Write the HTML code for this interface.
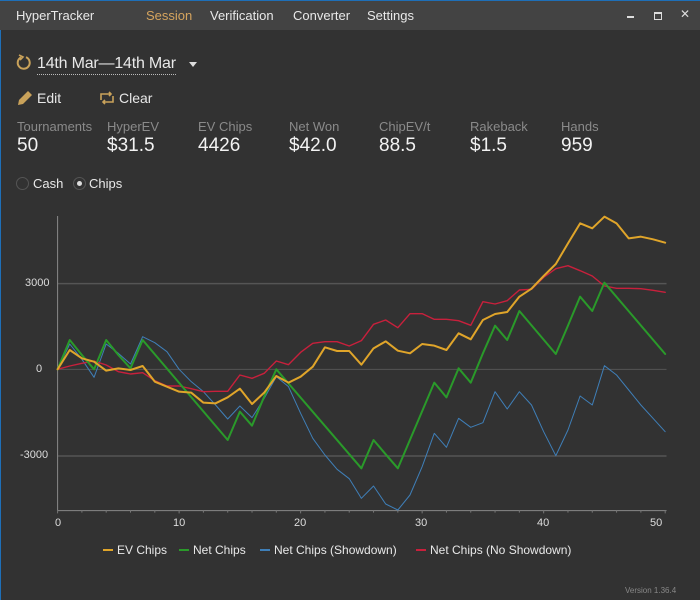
<!DOCTYPE html>
<html><head><style>
body{margin:0;width:700px;height:600px;background:#323232;font-family:"Liberation Sans",sans-serif;color:#e8e8e8;position:relative;overflow:hidden}
.a{position:absolute;white-space:nowrap}
.tb{position:absolute;left:0;top:0;width:700px;height:30px;background:#434343;border-top:1px solid #1e6fb8;box-sizing:border-box}
.lbl{color:#8a8a8a;font-size:13px;top:119px}
.val{color:#f2f2f2;font-size:19px;top:135px}
</style></head><body>
<div style="position:absolute;left:0;top:0;width:1px;height:600px;background:#1e6fb8"></div>
<div class="tb"></div>
<div class="a" style="left:16px;top:8px;font-size:13px">HyperTracker</div>
<div class="a" style="left:146px;top:8px;font-size:13px;color:#d5a45e">Session</div>
<div class="a" style="left:210px;top:8px;font-size:13px">Verification</div>
<div class="a" style="left:293px;top:8px;font-size:13px">Converter</div>
<div class="a" style="left:367px;top:8px;font-size:13px">Settings</div>
<div class="a" style="left:627px;top:16px;width:7px;height:2px;background:#ddd"></div>
<div class="a" style="left:654px;top:12px;width:6px;height:5px;border:1px solid #ddd;border-top-width:2px"></div>
<div class="a" style="left:680px;top:7px;font-size:12px;color:#ddd">✕</div>

<svg class="a" style="left:15px;top:54px" width="18" height="18" viewBox="0 0 18 18"><path d="M11 3.2 A6 6 0 1 1 6 3.4" fill="none" stroke="#c9a25a" stroke-width="2"/><path d="M4 1 L8 3 L5 6" fill="none" stroke="#c9a25a" stroke-width="1.6"/></svg>
<div class="a" style="left:37px;top:54px;font-size:16px;letter-spacing:-0.2px;border-bottom:1px dotted #bbb;line-height:20px">14th Mar—14th Mar</div>
<div class="a" style="left:189px;top:62px;width:0;height:0;border-left:4px solid transparent;border-right:4px solid transparent;border-top:5px solid #ddd"></div>

<svg class="a" style="left:16px;top:89px" width="18" height="18" viewBox="0 0 18 18"><path d="M2 16 L3 11 L12 2 L16 6 L7 15 Z" fill="#c9a25a"/></svg>
<div class="a" style="left:37px;top:90px;font-size:14px">Edit</div>
<svg class="a" style="left:98px;top:90px" width="18" height="16" viewBox="0 0 18 16"><path d="M3 10 V4 H13 M11 2 L13 4 L11 6 M15 6 V12 H5 M7 10 L5 12 L7 14" fill="none" stroke="#c9a25a" stroke-width="1.6"/></svg>
<div class="a" style="left:119px;top:90px;font-size:14px">Clear</div>

<div class="a lbl" style="left:17px">Tournaments</div><div class="a val" style="left:17px">50</div>
<div class="a lbl" style="left:107px">HyperEV</div><div class="a val" style="left:107px">$31.5</div>
<div class="a lbl" style="left:198px">EV Chips</div><div class="a val" style="left:198px">4426</div>
<div class="a lbl" style="left:289px">Net Won</div><div class="a val" style="left:289px">$42.0</div>
<div class="a lbl" style="left:379px">ChipEV/t</div><div class="a val" style="left:379px">88.5</div>
<div class="a lbl" style="left:470px">Rakeback</div><div class="a val" style="left:470px">$1.5</div>
<div class="a lbl" style="left:561px">Hands</div><div class="a val" style="left:561px">959</div>

<div class="a" style="left:16px;top:177px;width:11px;height:11px;border:1px solid #555;border-radius:50%"></div>
<div class="a" style="left:33px;top:176px;font-size:13px">Cash</div>
<div class="a" style="left:73px;top:177px;width:11px;height:11px;border:1px solid #555;border-radius:50%;box-sizing:content-box"><div style="margin:3px;width:5px;height:5px;border-radius:50%;background:#ddd"></div></div>
<div class="a" style="left:89px;top:176px;font-size:13px">Chips</div>

<svg class="a" style="left:0;top:200px" width="700" height="400" viewBox="0 0 1568 1200" preserveAspectRatio="none">
<g stroke="#555" stroke-width="1" vector-effect="non-scaling-stroke">
<line x1="129" y1="251" x2="1493" y2="251" vector-effect="non-scaling-stroke" stroke-width="1.5"/>
<line x1="129" y1="508" x2="1493" y2="508" vector-effect="non-scaling-stroke"/>
<line x1="129" y1="768" x2="1493" y2="768" vector-effect="non-scaling-stroke" stroke-width="1.5"/>
<line x1="129" y1="48" x2="129" y2="932" stroke="#888" vector-effect="non-scaling-stroke"/>
<line x1="129" y1="932" x2="1493" y2="932" stroke="#888" vector-effect="non-scaling-stroke"/>
</g>
<g transform="matrix(27.22,0,0,1,129,0)" stroke="#777">
<path vector-effect="non-scaling-stroke" d="M0,932v8 M2,932v6 M4,932v6 M6,932v6 M8,932v6 M10,932v8 M12,932v6 M14,932v6 M16,932v6 M18,932v6 M20,932v8 M22,932v6 M24,932v6 M26,932v6 M28,932v6 M30,932v8 M32,932v6 M34,932v6 M36,932v6 M38,932v6 M40,932v8 M42,932v6 M44,932v6 M46,932v6 M48,932v6 M50,932v8"/>
</g>
<g transform="matrix(27.22,0,0,1,129,0)" fill="none" stroke-linejoin="round" stroke-linecap="round">
<path vector-effect="non-scaling-stroke" stroke="#3f7fb8" stroke-width="1" d="M0,508 L1,432 2,478 3,532 4,432 5,460 6,492 7,410 8,428 9,455 10,508 11,545 12,575 13,615 14,657 15,618 16,653 17,595 18,530 19,560 20,640 21,715 22,765 23,808 24,836 25,895 26,858 27,912 28,930 29,885 30,800 31,700 32,742 33,655 34,682 35,668 36,575 37,627 38,575 39,615 40,695 41,767 42,690 43,588 44,615 45,497 46,525 47,570 48,615 49,655 50,695"/>
<path vector-effect="non-scaling-stroke" stroke="#c8203c" stroke-width="1.4" d="M0,508 L1,498 2,490 3,483 4,495 5,515 6,522 7,518 8,542 9,558 10,558 11,566 12,575 13,574 14,574 15,525 16,535 17,520 18,483 19,494 20,457 21,430 22,425 23,425 24,438 25,422 26,373 27,360 28,383 29,341 30,341 31,358 32,358 33,362 34,376 35,305 36,312 37,302 38,270 39,268 40,232 41,206 42,197 43,212 44,228 45,258 46,265 47,265 48,266 49,271 50,277"/>
<path vector-effect="non-scaling-stroke" stroke="#2a9a2a" stroke-width="2" d="M0,508 L1,420 2,465 3,508 4,420 5,465 6,505 7,420 14,720 15,635 16,677 17,590 18,508 25,805 26,720 27,763 28,805 31,548 32,592 33,505 34,548 35,460 36,377 37,420 38,333 41,462 42,377 43,290 44,333 45,248 50,462"/>
<path vector-effect="non-scaling-stroke" stroke="#e0a52a" stroke-width="2" d="M0,508 L1,450 2,475 3,485 4,512 5,505 6,510 7,498 8,545 9,560 10,575 11,578 12,608 13,610 14,592 15,566 16,612 17,578 18,528 19,548 20,530 21,500 22,442 23,453 24,453 25,494 26,445 27,424 28,452 29,460 30,432 31,437 32,450 33,400 34,418 35,360 36,342 37,336 38,290 39,266 40,228 41,192 42,130 43,70 44,85 45,50 46,70 47,115 48,110 49,118 50,128"/>
</g>
</svg>
<div class="a" style="left:25px;top:277px;font-size:11px;color:#ddd">3000</div>
<div class="a" style="left:36px;top:363px;font-size:11px;color:#ddd">0</div>
<div class="a" style="left:20px;top:449px;font-size:11px;color:#ddd">-3000</div>
<div class="a" style="left:55px;top:517px;font-size:11px;color:#ddd">0</div>
<div class="a" style="left:173px;top:517px;font-size:11px;color:#ddd">10</div>
<div class="a" style="left:294px;top:517px;font-size:11px;color:#ddd">20</div>
<div class="a" style="left:415px;top:517px;font-size:11px;color:#ddd">30</div>
<div class="a" style="left:537px;top:517px;font-size:11px;color:#ddd">40</div>
<div class="a" style="left:650px;top:517px;font-size:11px;color:#ddd">50</div>

<div class="a" style="left:103px;top:549px;width:10px;height:2px;background:#e0a52a"></div>
<div class="a" style="left:117px;top:543px;font-size:12px">EV Chips</div>
<div class="a" style="left:179px;top:549px;width:10px;height:2px;background:#2a9a2a"></div>
<div class="a" style="left:193px;top:543px;font-size:12px">Net Chips</div>
<div class="a" style="left:260px;top:549px;width:10px;height:2px;background:#3f7fb8"></div>
<div class="a" style="left:274px;top:543px;font-size:12px">Net Chips (Showdown)</div>
<div class="a" style="left:416px;top:549px;width:10px;height:2px;background:#c8203c"></div>
<div class="a" style="left:430px;top:543px;font-size:12px">Net Chips (No Showdown)</div>
<div class="a" style="left:625px;top:586px;font-size:8px;color:#888">Version 1.36.4</div>
</body></html>
